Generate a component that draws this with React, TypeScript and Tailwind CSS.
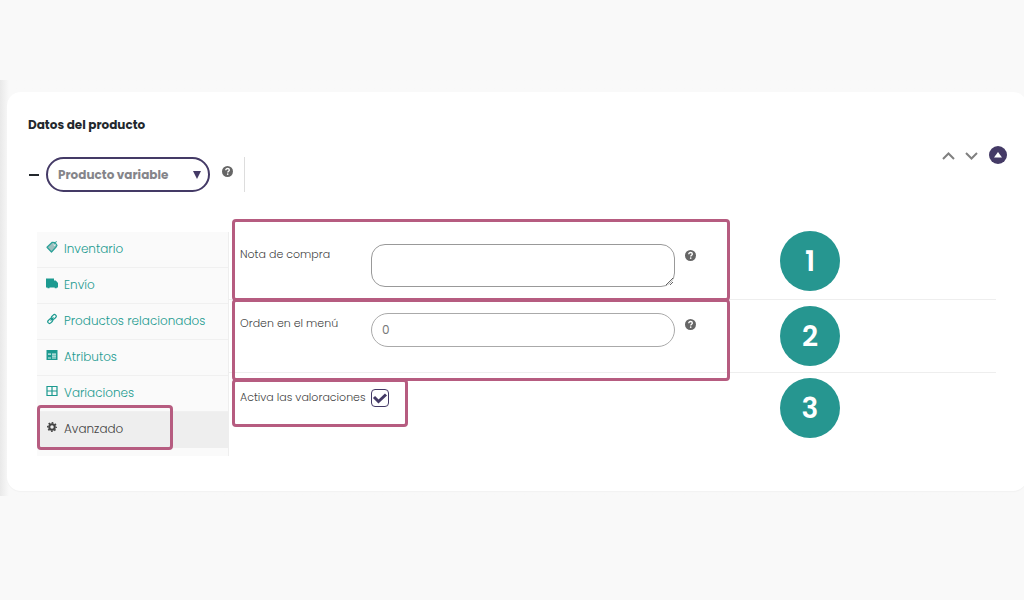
import type { ReactNode } from "react";

type Tab = { label: string; icon: ReactNode; active?: boolean };

const iconClass = "mb-[3px] h-3 w-3 shrink-0";

const TagIcon = () => (
  <svg viewBox="0 0 24 24" className={iconClass} aria-hidden="true">
    <path d="M12.500 2.500 18 3 22 8.500l-1.500 3L11 22 2 12.500Z" fill="#9cbfbe" stroke="#2aa198" strokeWidth="2.400" strokeLinejoin="round" />
    <circle cx="17" cy="7.500" r="1.800" fill="#fff" />
    <path d="M17 7c0-5 3-6 5-5.500" fill="none" stroke="#2aa198" strokeWidth="1.800" />
  </svg>
);

const TruckIcon = () => (
  <svg viewBox="0 0 24 22" className={iconClass} fill="currentColor" aria-hidden="true">
    <path d="M0 2h16v4h3.500l4.500 5v9h-2.500v1.500h-4V20H7v1.500H3V20H0Z" />
  </svg>
);

const LinkIcon = () => (
  <svg viewBox="0 0 24 24" className={iconClass} fill="none" stroke="currentColor" strokeWidth="2.4" aria-hidden="true">
    <rect x="10" y="4.500" width="11" height="7" rx="3.500" transform="rotate(-45 15.500 8)" />
    <rect x="3" y="12.500" width="11" height="7" rx="3.500" transform="rotate(-45 8.500 16)" />
    <path d="m9 15 6-6" />
  </svg>
);

const ListIcon = () => (
  <svg viewBox="0 0 24 24" className={iconClass} aria-hidden="true">
    <path d="M1 2h22v20H1Z" fill="currentColor" />
    <path d="M4 9h6v2.500H4ZM12 9h8v2.500h-8ZM12 13h8v2.500h-8ZM4 17h6v2H4ZM12 17h8v2h-8Z" fill="#d5eeec" />
  </svg>
);

const GridIcon = () => (
  <svg viewBox="0 0 24 24" className={iconClass} fill="none" stroke="currentColor" strokeWidth="2.4" aria-hidden="true">
    <path d="M2 3h20v18H2ZM12 3v18M2 12h20" />
  </svg>
);

const GearIcon = () => (
  <svg viewBox="0 0 24 24" className={iconClass} fill="none" stroke="currentColor" aria-hidden="true">
    <circle cx="12" cy="12" r="5.500" strokeWidth="4" />
    <circle cx="12" cy="12" r="8.500" strokeWidth="3" strokeDasharray="3.330 3.340" strokeDashoffset="1.670" />
  </svg>
);

const HelpIcon = () => (
  <svg viewBox="0 0 22 22" className="h-[11px] w-[11px] shrink-0" role="img" aria-label="Ayuda">
    <circle cx="11" cy="11" r="11" fill="#666" />
    <path d="M7.500 8.500c0-2.200 1.600-3.500 3.700-3.500 2 0 3.500 1.200 3.500 3 0 2.600-3.200 2.500-3.200 5" fill="none" stroke="#fff" strokeWidth="2.600" />
    <circle cx="11.400" cy="16.300" r="1.600" fill="#fff" />
  </svg>
);

const tabs: Tab[] = [
  { label: "Inventario", icon: <TagIcon /> },
  { label: "Envío", icon: <TruckIcon /> },
  { label: "Productos relacionados", icon: <LinkIcon /> },
  { label: "Atributos", icon: <ListIcon /> },
  { label: "Variaciones", icon: <GridIcon /> },
  { label: "Avanzado", icon: <GearIcon />, active: true },
];

const Highlight = ({ className }: { className: string }) => (
  <span aria-hidden="true" className={`pointer-events-none absolute rounded border-3 border-[#b65c80] ${className}`} />
);

const Step = ({ n, className }: { n: number; className: string }) => (
  <span className={`absolute left-[551px] flex h-[60px] w-[60px] items-center justify-center rounded-full bg-[#269690] pt-[2px] text-[28px] leading-none font-semibold text-white ${className}`}>
    {n}
  </span>
);

const labelClass = "w-[131px] shrink-0 text-[11px] leading-4 font-light whitespace-nowrap text-[#444]";

export default function App() {
  return (
    <div className="min-h-screen overflow-x-hidden bg-[#f9f9f9] pt-20 font-['Poppins','Inter',sans-serif]">
      <main className="bg-linear-to-r from-[#e9e9e9] to-[#f9f9f9] to-[9px] pt-3 pb-[5px]">
        <section className="-mr-[3px] ml-[7px] rounded-[14px] bg-white pb-[35px] shadow-[0_1px_1px_#f2f2f2]">
          <header className="flex items-start justify-between pr-5 pl-[21px]">
            <div>
              <h2 className="pt-[25px] text-[12px] leading-4 font-bold text-[#23282d]">Datos del producto</h2>
              <div className="mt-6 flex items-center">
                <span className="mr-[7px] ml-px h-[2px] w-[10px] bg-[#23282d]" />
                <div className="relative">
                  <select
                    aria-label="Tipo de producto"
                    className="h-[35px] w-[164px] appearance-none rounded-full border-2 border-[#443a66] bg-white pl-[10px] text-[12px] font-bold text-[#85858a]"
                  >
                    <option>Producto variable</option>
                  </select>
                  <svg viewBox="0 0 8 8" className="pointer-events-none absolute top-[14px] right-[9px] h-2 w-2" aria-hidden="true">
                    <path d="M0 0h8L4 8Z" fill="#443a66" />
                  </svg>
                </div>
                <div className="ml-3 flex h-[35px] w-[23px] items-start border-r border-[#ddd] pt-[9px]">
                  <HelpIcon />
                </div>
              </div>
            </div>
            <div className="flex items-center gap-[10px] pt-[54px] text-[#808080]">
              <button type="button" aria-label="Subir">
                <svg viewBox="0 0 13 18" className="h-[18px] w-[13px]" fill="none" stroke="currentColor" strokeWidth="2">
                  <path d="m1 13 5.500-5.500L12 13" />
                </svg>
              </button>
              <button type="button" aria-label="Bajar" className="pr-px">
                <svg viewBox="0 0 13 18" className="h-[18px] w-[13px]" fill="none" stroke="currentColor" strokeWidth="2">
                  <path d="m1 7 5.500 5.500L12 7" />
                </svg>
              </button>
              <button type="button" aria-label="Alternar panel">
                <svg viewBox="0 0 18 18" className="h-[18px] w-[18px]">
                  <circle cx="9" cy="9" r="9" fill="#443a66" />
                  <path d="M9 6 13 11.500H5Z" fill="#fff" />
                </svg>
              </button>
            </div>
          </header>

          <div className="mt-10 flex pr-[31px] pl-[30px]">
            <nav className="w-48 shrink-0 border-r border-[#eee] bg-[#fafafa] pb-2">
              <ul>
                {tabs.map((tab) => (
                  <li key={tab.label} className="relative">
                    <a
                      href="#"
                      className={`flex h-9 items-center gap-[6px] border-b pr-2 pb-[2px] pl-[9px] text-[12px] font-light whitespace-nowrap ${
                        tab.active ? "border-[#eee] bg-[#eee] text-[#444]" : "border-[#f0f0f0] text-[#1c9a90]"
                      }`}
                    >
                      {tab.icon}
                      {tab.label}
                    </a>
                    {tab.active && <Highlight className="-top-[7px] left-0 h-[45px] w-[136px]" />}
                  </li>
                ))}
              </ul>
            </nav>

            <form className="min-w-0 flex-1">
              <div className="relative flex items-start border-b border-[#eee] py-3 pl-[11px]">
                <label htmlFor="note" className={`${labelClass} pt-[2px]`}>Nota de compra</label>
                <textarea id="note" className="block h-[43px] w-[304px] resize rounded-[14px] border border-[#999] bg-white px-3 py-1 text-[12px]" />
                <span className="pt-[6px] pl-[10px]"><HelpIcon /></span>
                <Highlight className="-top-[13px] left-[3px] h-[82px] w-[498px]" />
                <Step n={1} className="-top-px" />
              </div>
              <div className="relative flex items-start border-b border-[#eee] pt-[13px] pb-[25px] pl-[11px]">
                <label htmlFor="order" className={`${labelClass} pt-[2px]`}>Orden en el menú</label>
                <input id="order" type="text" defaultValue="0" className="h-[34px] w-[304px] rounded-full border border-[#aaa] bg-white px-[10px] text-[12px] text-[#777]" />
                <span className="pt-[6px] pl-[10px]"><HelpIcon /></span>
                <Highlight className="-top-px left-[3px] h-[82px] w-[498px]" />
                <Step n={2} className="top-[6px]" />
              </div>
              <div className="relative flex items-start pt-4 pl-[11px]">
                <label htmlFor="reviews" className={labelClass}>Activa las valoraciones</label>
                <span className="relative h-[18px] w-[18px]">
                  <input id="reviews" type="checkbox" defaultChecked className="block h-[18px] w-[18px] appearance-none rounded border border-[#443a66] bg-white" />
                  <svg viewBox="0 0 18 18" className="pointer-events-none absolute inset-0 h-[18px] w-[18px]" fill="none" stroke="#443a66" strokeWidth="3" aria-hidden="true">
                    <path d="M3 8 7.500 12.500 15 5.500" />
                  </svg>
                </span>
                <Highlight className="top-[6px] left-[3px] h-12 w-[176px]" />
                <Step n={3} className="top-[5px]" />
              </div>
            </form>
          </div>
        </section>
      </main>
    </div>
  );
}
